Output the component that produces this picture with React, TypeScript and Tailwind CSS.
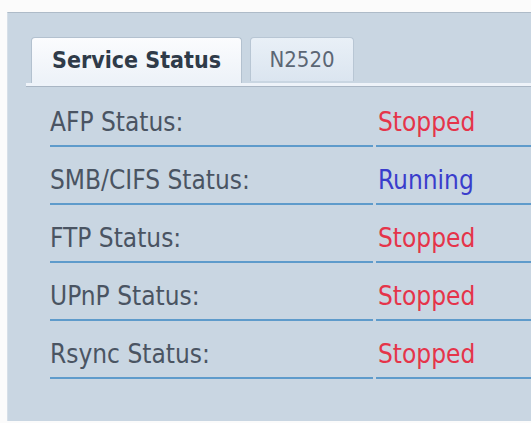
const rows = [
  { label: 'AFP Status:', value: 'Stopped' },
  { label: 'SMB/CIFS Status:', value: 'Running' },
  { label: 'FTP Status:', value: 'Stopped' },
  { label: 'UPnP Status:', value: 'Stopped' },
  { label: 'Rsync Status:', value: 'Stopped' },
]

export default function App() {
  return (
    <div className="h-[423px] w-full overflow-hidden bg-[#fbfbfb] pt-[12px] pl-[7px] font-['DejaVu_Sans_Condensed','DejaVu_Sans',sans-serif]">
      <div className="h-[409px] border-t border-l border-t-[#aebbc8] border-l-[#d6dfe8] bg-[#c9d6e2]">
        {/* tab strip */}
        <div className="pt-[24px] pl-[18px]">
          <div className="flex items-end pl-[5px]">
            <div className="flex h-[46px] w-[211px] items-center justify-center rounded-t-[4px] border border-b-0 border-[#b3c1cf] bg-gradient-to-b from-[#fbfcfe] to-[#edf2f8] text-[23px] font-bold text-[#2f3b49]">
              Service Status
            </div>
            <div className="mb-[2px] ml-[8px] flex h-[44px] w-[104px] items-center justify-center rounded-t-[4px] border border-b-0 border-[#b8c6d4] bg-gradient-to-b from-[#e9f0f7] to-[#dbe5f0] text-[22px] text-[#5b6674]">
              N2520
            </div>
          </div>
          <div className="h-[4px] border-b border-[#a9b6c4] bg-[#eef3f9]" />
        </div>

        {/* rows */}
        <div className="mt-[2px] pl-[42px]">
          {rows.map((row) => (
            <div key={row.label} className="flex h-[58px] items-end text-[26px] leading-[26px]">
              <div className="flex h-full w-[323px] items-end border-b-2 border-[#5e9bcb] pb-[10px] text-[#4a5462]">
                {row.label}
              </div>
              <div
                className={
                  row.value === 'Running'
                    ? 'ml-[3px] flex h-full flex-1 items-end border-b-2 border-[#5e9bcb] pb-[10px] pl-[2px] text-[#3a3dcc]'
                    : 'ml-[3px] flex h-full flex-1 items-end border-b-2 border-[#5e9bcb] pb-[10px] pl-[2px] text-[#e5344a]'
                }
              >
                {row.value}
              </div>
            </div>
          ))}
        </div>
      </div>
    </div>
  )
}
